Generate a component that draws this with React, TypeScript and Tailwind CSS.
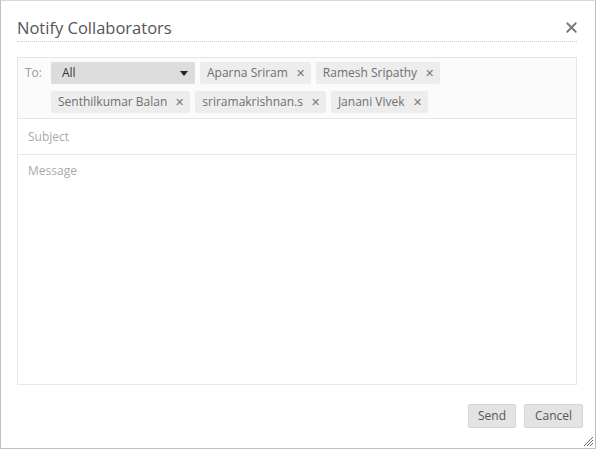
import { X } from 'lucide-react';

const recipients = ['Aparna Sriram', 'Ramesh Sripathy', 'Senthilkumar Balan', 'sriramakrishnan.s', 'Janani Vivek'];

function Chip({ name }: { name: string }) {
  return (
    <span className="flex items-center h-[22px] pl-[7px] pr-[6px] gap-[8px] rounded-[2px] bg-[#ededed] text-[12px] text-[#6f6f6f]">
      {name}
      <span className="text-[11px] text-[#777]">✕</span>
    </span>
  );
}

export default function App() {
  return (
    <div
      className="relative w-[596px] h-[449px] bg-white border border-[#bfbfbf] border-t-[#d8d8d8] flex flex-col"
      style={{ fontFamily: '"Open Sans", "Liberation Sans", sans-serif' }}
    >
      {/* header */}
      <div className="mt-[15px] mx-[16px] mr-[18px] flex items-center justify-between border-b border-dotted border-[#cfcfcf] pb-[2px]">
        <h1 className="text-[16.5px] leading-[23px] text-[#555]">Notify Collaborators</h1>
        <X size={17} strokeWidth={2.5} className="text-[#777] mr-[-3px]" />
      </div>

      {/* form */}
      <div className="mt-[15px] mx-[16px] mr-[18px] border border-[#e6e6e6] text-[12px]">
        <div className="flex items-start pl-[7px] pt-[4px] pb-[5px] bg-[#fbfbfb] border-b border-[#e6e6e6]">
          <span className="text-[#9a9a9a] leading-[22px] w-[26px]">To:</span>
          <div className="flex flex-wrap gap-x-[5px] gap-y-[7px] w-[510px]">
            <span className="flex items-center justify-between w-[144px] h-[22px] pl-[11px] pr-[7px] rounded-[2px] bg-[#dcdcdc] text-[#333]">
              All
              <svg width="8" height="5" viewBox="0 0 8 5"><path d="M0 0h8L4 5z" fill="#222" /></svg>
            </span>
            {recipients.map((r) => (
              <Chip key={r} name={r} />
            ))}
          </div>
        </div>
        <div className="h-[36px] flex items-center pl-[10px] text-[#aaa] border-b border-[#e6e6e6]">Subject</div>
        <div className="h-[229px] pl-[10px] pt-[7px] text-[#aaa]">Message</div>
      </div>

      {/* actions */}
      <div className="mt-[19px] mr-[12px] flex justify-end gap-[8px] text-[12px] text-[#555]">
        <button className="h-[24px] w-[48px] rounded-[2px] bg-[#e3e3e3] border border-[#d4d4d4]">Send</button>
        <button className="h-[24px] w-[59px] rounded-[2px] bg-[#e3e3e3] border border-[#d4d4d4]">Cancel</button>
      </div>

      <svg className="absolute right-[2px] bottom-[2px]" width="10" height="10" viewBox="0 0 10 10">
        <path d="M10 1L1 10M10 4L4 10M10 7L7 10" stroke="#666" strokeWidth="1" />
      </svg>
    </div>
  );
}
